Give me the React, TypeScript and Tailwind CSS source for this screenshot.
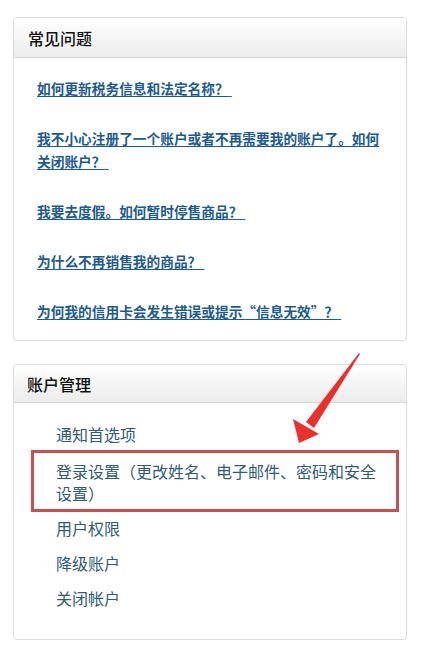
const faqs = [
  "如何更新税务信息和法定名称？",
  "我不小心注册了一个账户或者不再需要我的账户了。如何关闭账户？",
  "我要去度假。如何暂时停售商品？",
  "为什么不再销售我的商品？",
  "为何我的信用卡会发生错误或提示“信息无效”？",
];

const accountLinks = [
  { text: "通知首选项" },
  { text: "登录设置（更改姓名、电子邮件、密码和安全设置）", marked: true },
  { text: "用户权限" },
  { text: "降级账户" },
  { text: "关闭帐户" },
];

const Arrow = () => (
  <svg
    className="absolute left-[286px] top-[348px] pointer-events-none"
    width="80"
    height="100"
    viewBox="0 0 80 100"
  >
    <path d="M73 5 L74 6 L28 80 L20 74 Z" fill="#e8302e" />
    <polygon points="13,95 7,71 33,86" fill="#e8302e" />
  </svg>
);

export default function App() {
  return (
    <div
      className="relative min-h-[660px] w-[422px] bg-white pt-[17px] px-[13px]"
      style={{ fontFamily: '"Noto Sans CJK SC", "Noto Sans", sans-serif' }}
    >
      <div className="w-[394px] rounded-[4px] border border-[#dcdcdc] bg-white overflow-hidden">
        <div className="h-[40px] flex items-center px-[14px] bg-gradient-to-b from-white to-[#ececec] border-b border-[#d6d6d6]">
          <h2 className="text-[16px] font-medium text-[#111]">常见问题</h2>
        </div>
        <ul className="flex flex-col gap-[27px] pl-[23px] pr-[20px] pt-[19px] pb-[17px]">
          {faqs.map((q) => (
            <li key={q} className="text-[13.7px] leading-[23px]">
              <a
                href="#"
                className="font-bold text-[#1d5b8e] underline underline-offset-2"
              >
                {q}&nbsp;
              </a>
            </li>
          ))}
        </ul>
      </div>

      <div className="mt-[23px] w-[394px] rounded-[4px] border border-[#dcdcdc] bg-white">
        <div className="h-[38px] flex items-center px-[13px] rounded-t-[4px] bg-gradient-to-b from-white to-[#ececec] border-b border-[#d6d6d6]">
          <h2 className="text-[16px] font-medium text-[#111]">账户管理</h2>
        </div>
        <ul className="flex flex-col gap-[13px] pl-[42px] pr-[20px] pt-[20px] pb-[30px]">
          {accountLinks.map((l) => (
            <li
              key={l.text}
              className={
                l.marked
                  ? "relative mt-[2px] leading-[22px] text-[16px] text-[#2f5b74]"
                  : "relative leading-[22px] text-[16px] text-[#2f5b74]"
              }
            >
              {l.marked && (
                <div className="absolute -left-[25px] -right-[13px] -top-[10px] -bottom-[8px] border-[3px] border-[#c8514f] pointer-events-none" />
              )}
              <a href="#">{l.text}</a>
            </li>
          ))}
        </ul>
      </div>

      <Arrow />
    </div>
  );
}
